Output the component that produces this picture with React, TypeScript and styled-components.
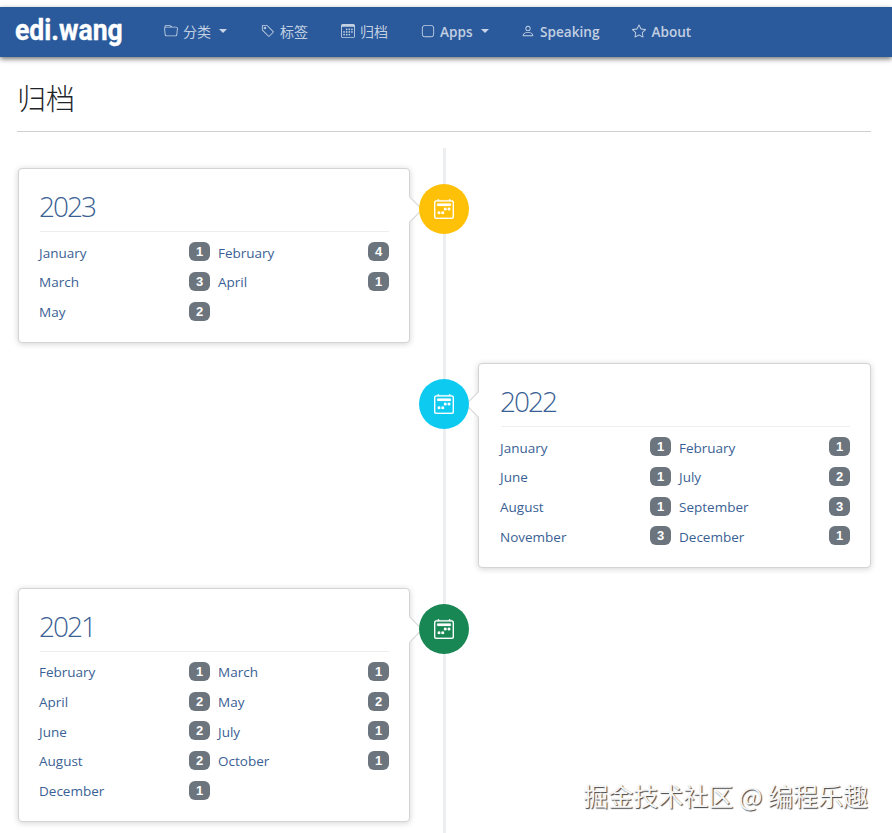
import styled, { createGlobalStyle } from 'styled-components';
import { BsApp, BsCalendar2Week, BsCalendar3, BsFolder, BsPerson, BsStar, BsTag } from 'react-icons/bs';
import type { ReactNode } from 'react';

type Month = { name: string; count: number };

type YearArchive = {
  year: number;
  side: 'left' | 'right';
  color: string;
  months: Month[];
};

type NavEntry = {
  label: string;
  icon: ReactNode;
  dropdown?: boolean;
  latin?: boolean;
};

const NAV_ITEMS: NavEntry[] = [
  { label: '分类', icon: <BsFolder />, dropdown: true },
  { label: '标签', icon: <BsTag /> },
  { label: '归档', icon: <BsCalendar3 /> },
  { label: 'Apps', icon: <BsApp />, dropdown: true, latin: true },
  { label: 'Speaking', icon: <BsPerson />, latin: true },
  { label: 'About', icon: <BsStar />, latin: true },
];

const ARCHIVES: YearArchive[] = [
  {
    year: 2023,
    side: 'left',
    color: '#ffc107',
    months: [
      { name: 'January', count: 1 },
      { name: 'February', count: 4 },
      { name: 'March', count: 3 },
      { name: 'April', count: 1 },
      { name: 'May', count: 2 },
    ],
  },
  {
    year: 2022,
    side: 'right',
    color: '#0dcaf0',
    months: [
      { name: 'January', count: 1 },
      { name: 'February', count: 1 },
      { name: 'June', count: 1 },
      { name: 'July', count: 2 },
      { name: 'August', count: 1 },
      { name: 'September', count: 3 },
      { name: 'November', count: 3 },
      { name: 'December', count: 1 },
    ],
  },
  {
    year: 2021,
    side: 'left',
    color: '#198754',
    months: [
      { name: 'February', count: 1 },
      { name: 'March', count: 1 },
      { name: 'April', count: 2 },
      { name: 'May', count: 2 },
      { name: 'June', count: 2 },
      { name: 'July', count: 1 },
      { name: 'August', count: 2 },
      { name: 'October', count: 1 },
      { name: 'December', count: 1 },
    ],
  },
];

export default function App() {
  return (
    <>
      <GlobalStyle />
      <Navbar>
        <Brand>edi.wang</Brand>
        <NavList>
          {NAV_ITEMS.map(item => (
            <NavItem key={item.label} latin={item.latin}>
              <NavIcon>{item.icon}</NavIcon>
              {item.label}
              {item.dropdown && <Caret latin={item.latin} />}
            </NavItem>
          ))}
        </NavList>
      </Navbar>
      <Main>
        <Title>归档</Title>
        <Divider />
        <Timeline>
          {ARCHIVES.map(archive => (
            <TimelineRow key={archive.year} side={archive.side}>
              <Marker color={archive.color}>
                <BsCalendar2Week />
              </Marker>
              <Card side={archive.side}>
                <Year>{archive.year}</Year>
                <YearRule />
                <MonthGrid>
                  {archive.months.map(month => (
                    <MonthRow key={month.name}>
                      <MonthLink>{month.name}</MonthLink>
                      <CountBadge>{month.count}</CountBadge>
                    </MonthRow>
                  ))}
                </MonthGrid>
              </Card>
            </TimelineRow>
          ))}
        </Timeline>
      </Main>
      <Watermark>掘金技术社区 @ 编程乐趣</Watermark>
    </>
  );
}

const GlobalStyle = createGlobalStyle`
  html, body {
    margin: 0;
    padding: 0;
    background: #fff;
    overflow: hidden;
  }

  body {
    height: 833px;
    font-family: "Open Sans", "Noto Sans CJK SC", sans-serif;
  }

  #root {
    position: relative;
    height: 833px;
    overflow: hidden;
    padding-top: 7px;
    box-sizing: border-box;
  }
`;

const Navbar = styled.nav`
  position: relative;
  z-index: 2;
  display: flex;
  align-items: center;
  height: 50px;
  padding-left: 15px;
  background-color: #2a5a9c;
  box-shadow: 0 2px 5px rgba(0, 0, 0, 0.55);
`;

const Brand = styled.div`
  width: 149px;
  margin-top: -5px;
  color: #fff;
  font-family: "Roboto", sans-serif;
  font-size: 30px;
  font-weight: 700;
  -webkit-text-stroke: 0.4px #fff;
  transform: scaleX(0.885);
  transform-origin: left center;
`;

const NavList = styled.ul`
  display: flex;
  align-items: center;
  gap: 33px;
  margin: 0;
  padding: 0 0 2px;
  list-style: none;
`;

const NavItem = styled.li<{ latin?: boolean }>`
  display: flex;
  align-items: center;
  color: rgba(255, 255, 255, 0.72);
  font-size: ${({ latin }) => (latin ? '13.6px' : '14px')};
  font-weight: ${({ latin }) => (latin ? 600 : 400)};
  white-space: nowrap;
`;

const NavIcon = styled.span`
  display: flex;
  margin-right: 5px;
  font-size: 14px;
`;

const Caret = styled.span<{ latin?: boolean }>`
  width: 0;
  height: 0;
  margin: 0 ${({ latin }) => (latin ? '-0.5px' : '1px')} 0 8px;
  border-top: 4px solid rgba(255, 255, 255, 0.75);
  border-right: 4px solid transparent;
  border-left: 4px solid transparent;
`;

const Main = styled.main`
  padding: 0 21px 0 17px;
`;

const Title = styled.h1`
  margin: 24px 0 14px 0;
  color: #212529;
  font-size: 29px;
  font-weight: 300;
  line-height: 36px;
`;

const Divider = styled.hr`
  height: 1px;
  margin: 0;
  border: 0;
  background-color: #cfcfcf;
`;

const Timeline = styled.div`
  position: relative;
  display: flex;
  flex-direction: column;
  gap: 20px;
  margin-top: 16px;
  padding-top: 20px;

  &::before {
    content: '';
    position: absolute;
    top: 0;
    bottom: -200px;
    left: calc(50% - 1.5px);
    width: 3px;
    background-color: #eceeef;
  }
`;

const TimelineRow = styled.div<{ side: 'left' | 'right' }>`
  position: relative;
  display: flex;
  justify-content: ${({ side }) => (side === 'left' ? 'flex-start' : 'flex-end')};
`;

const Marker = styled.div<{ color: string }>`
  position: absolute;
  z-index: 1;
  top: 16px;
  left: calc(50% - 25px);
  display: flex;
  align-items: center;
  justify-content: center;
  width: 50px;
  height: 50px;
  border-radius: 50%;
  background-color: ${({ color }) => color};
  color: #fff;
  font-size: 20px;

  svg {
    stroke: currentColor;
    stroke-width: 0.2;
  }
`;

const Card = styled.section<{ side: 'left' | 'right' }>`
  position: relative;
  box-sizing: border-box;
  width: ${({ side }) => (side === 'left' ? '392px' : '393px')};
  margin-left: ${({ side }) => (side === 'left' ? '1px' : '0')};
  padding: 20px 20px 15.3px ${({ side }) => (side === 'left' ? '20px' : '21px')};
  border: 1px solid #d4d4d4;
  border-radius: 4px;
  background-color: #fff;
  box-shadow: 0 1px 6px rgba(0, 0, 0, 0.175);

  &::after {
    content: '';
    position: absolute;
    top: 31px;
    ${({ side }) => (side === 'left' ? 'right: -10px;' : 'left: -10px;')}
    width: 18px;
    height: 18px;
    background-color: #fff;
    border: 1px solid #d4d4d4;
    ${({ side }) =>
      side === 'left'
        ? 'border-width: 1px 1px 0 0;'
        : 'border-width: 0 0 1px 1px;'}
    transform: rotate(45deg);
  }
`;

const Year = styled.h3`
  margin: 0 0 8px 0;
  color: #3a5f94;
  font-size: 28px;
  font-weight: 300;
  line-height: 34px;
  letter-spacing: -2px;
`;

const YearRule = styled.hr`
  height: 1px;
  margin: 0 0 5.7px 1px;
  border: 0;
  background-color: #eeeeee;
`;

const MonthGrid = styled.div`
  display: grid;
  grid-template-columns: 171px 171px;
  grid-auto-rows: 29.7px;
  column-gap: 8px;
`;

const MonthRow = styled.div`
  display: flex;
  align-items: center;
  justify-content: space-between;
`;

const MonthLink = styled.span`
  color: #3a5f94;
  font-size: 13.5px;
`;

const CountBadge = styled.span`
  display: flex;
  align-items: center;
  justify-content: center;
  width: 21px;
  height: 19px;
  margin-bottom: 1.4px;
  border-radius: 6px;
  background-color: #6c757d;
  color: #fff;
  font-family: "Liberation Sans", sans-serif;
  font-size: 13px;
  font-weight: 700;
`;

const Watermark = styled.div`
  position: absolute;
  z-index: 3;
  right: 24px;
  bottom: 23px;
  color: #f6f6f6;
  font-family: "Noto Sans CJK SC", sans-serif;
  font-size: 25px;
  line-height: 30px;
  white-space: nowrap;
  text-shadow: 1px 1px 1px rgba(0, 0, 0, 0.75);
`;
